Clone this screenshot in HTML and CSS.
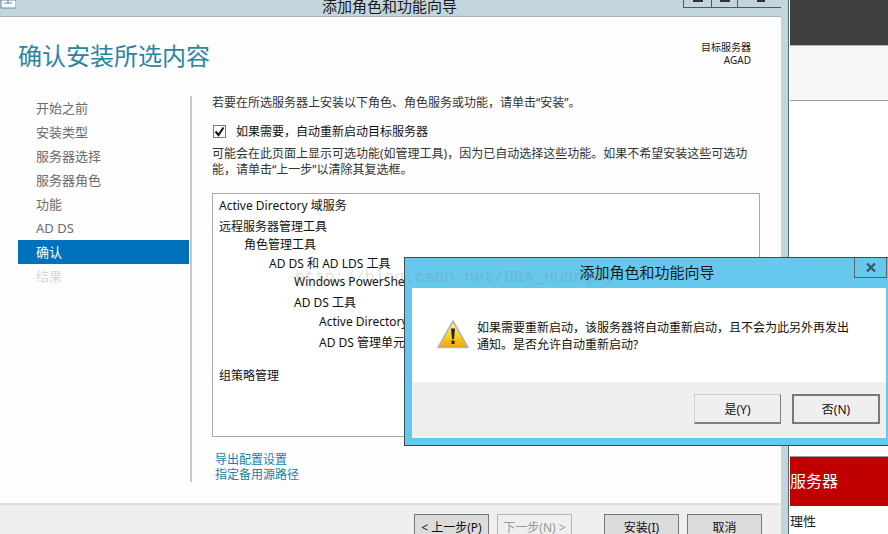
FILE: index.html
```html
<!DOCTYPE html>
<html lang="zh-CN">
<head>
    <meta charset="UTF-8">
    <title>添加角色和功能向导</title>
    <link rel="stylesheet" href="styles.css">
</head>
<body>
    <div class="side-panel">
        <div class="panel-dark"></div>
        <div class="panel-light"></div>
        <div class="panel-blank"></div>
        <div class="panel-red">服务器</div>
        <div class="panel-text">管理性</div>
    </div>

    <div class="wizard">
        <div class="titlebar">
            <svg class="app-icon" width="16" height="9" viewBox="0 0 16 9">
                <path d="M0 0H16V8H1V0" fill="#fff" stroke="#5f8ea3"/>
                <path d="M4 3H12M8 0V4" stroke="#5f8ea3" fill="none"/>
            </svg>
            <div class="title-text">添加角色和功能向导</div>
            <div class="win-buttons">
                <div class="win-btn min"><span></span></div>
                <div class="win-btn max"><span></span></div>
                <div class="win-btn close"><span></span></div>
            </div>
        </div>

        <div class="wizard-body">
            <div class="wizard-head">
                <h1>确认安装所选内容</h1>
                <div class="target">
                    <div>目标服务器</div>
                    <div>AGAD</div>
                </div>
            </div>

            <div class="wizard-main">
                <ul class="steps">
                    <li>开始之前</li>
                    <li>安装类型</li>
                    <li>服务器选择</li>
                    <li>服务器角色</li>
                    <li>功能</li>
                    <li>AD DS</li>
                    <li class="active">确认</li>
                    <li class="disabled">结果</li>
                </ul>

                <div class="content">
                    <p class="intro">若要在所选服务器上安装以下角色、角色服务或功能，请单击“安装”。</p>
                    <div class="check-row">
                        <div class="checkbox">
                            <svg width="11" height="11" viewBox="0 0 11 11">
                                <path d="M1.5 5.5L4.5 9L9.5 1.5" fill="none" stroke="#111" stroke-width="2"/>
                            </svg>
                        </div>
                        <span>如果需要，自动重新启动目标服务器</span>
                    </div>
                    <p class="note">可能会在此页面上显示可选功能(如管理工具)，因为已自动选择这些功能。如果不希望安装这些可选功能，请单击“上一步”以清除其复选框。</p>

                    <div class="feature-box">
                        <div class="row">Active Directory 域服务</div>
                        <div class="row sp3">远程服务器管理工具</div>
                        <div class="row lv1">角色管理工具</div>
                        <div class="row lv2 sp1">AD DS 和 AD LDS 工具</div>
                        <div class="row lv3">Windows PowerShell 的 Active Directory 模块</div>
                        <div class="row lv3 sp3">AD DS 工具</div>
                        <div class="row lv4 sp1">Active Directory 管理中心</div>
                        <div class="row lv4 sp3">AD DS 管理单元和命令行工具</div>
                        <div class="row sp15">组策略管理</div>
                    </div>

                    <div class="links">
                        <a>导出配置设置</a>
                        <a>指定备用源路径</a>
                    </div>
                </div>
            </div>
        </div>

        <div class="wizard-foot">
            <button class="btn">&lt; 上一步(P)</button>
            <button class="btn off">下一步(N) &gt;</button>
            <button class="btn install">安装(I)</button>
            <button class="btn">取消</button>
        </div>
    </div>

    <div class="dialog">
        <div class="dialog-title">
            <span>添加角色和功能向导</span>
            <div class="dialog-close">
                <svg width="10" height="9" viewBox="0 0 10 9">
                    <path d="M1 0.5L9 8.5M9 0.5L1 8.5" stroke="#3d5560" stroke-width="2.2" fill="none"/>
                </svg>
            </div>
        </div>
        <div class="dialog-msg">
            <svg class="warn" width="32" height="29" viewBox="0 0 32 29">
                <defs>
                    <linearGradient id="warnfill" x1="0" y1="0" x2="0" y2="1">
                        <stop offset="0" stop-color="#fff3a0"/>
                        <stop offset="0.55" stop-color="#fbd11e"/>
                        <stop offset="1" stop-color="#f0a400"/>
                    </linearGradient>
                </defs>
                <path d="M16 1L31 27.5H1Z" fill="url(#warnfill)" stroke="#b4b4b4" stroke-width="1.6" stroke-linejoin="round"/>
                <path d="M14 8.5H18L17 19H15Z" fill="#222"/>
                <rect x="14.5" y="20.5" width="3" height="3.5" fill="#222"/>
            </svg>
            <p>如果需要重新启动，该服务器将自动重新启动，且不会为此另外再发出通知。是否允许自动重新启动?</p>
        </div>
        <div class="dialog-foot">
            <button class="dlg-btn">是(Y)</button>
            <button class="dlg-btn focus">否(N)</button>
        </div>
    </div>

    <div class="watermark">http://blog.csdn.net/DBA_Huangzj</div>
</body>
</html>
```

FILE: styles.css
```css
html, body {
    margin: 0;
    height: 534px;
    overflow: hidden;
}

body {
    position: relative;
    background: #fff;
    font-family: "Noto Sans", "Noto Sans CJK SC", sans-serif;
    font-size: 12px;
    color: #222;
}

/* server manager behind the wizard */
.side-panel {
    position: absolute;
    left: 790px;
    top: 0;
    width: 98px;
    height: 534px;
    overflow: hidden;
    display: flex;
    flex-direction: column;
}

.panel-dark {
    height: 45px;
    flex: none;
    background: #404040;
    border-bottom: 1px solid #b5b5b5;
}

.panel-light {
    height: 54px;
    flex: none;
    background: #f8f8f8;
    border-bottom: 1px solid #999;
}

.panel-blank {
    height: 355px;
    flex: none;
    border-bottom: 1px solid #999;
}

.panel-red {
    height: 49px;
    flex: none;
    background: #c00000;
    color: #fff;
    font-size: 16px;
    line-height: 49px;
}

.panel-text {
    font-size: 13px;
    line-height: 30px;
    margin-left: -13px;
    white-space: nowrap;
}

/* wizard window */
.wizard {
    position: absolute;
    left: 0;
    top: 0;
    width: 789px;
    height: 534px;
    box-sizing: border-box;
    background: #c2d5dc;
    border-right: 1px solid #5a6a72;
    padding-right: 7px;
    display: flex;
    flex-direction: column;
    overflow: hidden;
}

.titlebar {
    height: 16px;
    flex: none;
    position: relative;
    display: flex;
    justify-content: center;
    align-items: flex-end;
    overflow: hidden;
    border-bottom: 1px solid #a5b4bb;
}

.app-icon {
    position: absolute;
    left: 0;
    top: 0;
}

.title-text {
    font-size: 15px;
    line-height: 22px;
    margin-left: -2px;
    margin-bottom: -1px;
    white-space: nowrap;
    color: #1a1a1a;
}

.win-buttons {
    position: absolute;
    left: 683px;
    top: 0;
    width: 101px;
    height: 8px;
    box-sizing: border-box;
    display: flex;
    border: 1px solid #4c5a62;
    border-top: none;
}

.win-btn {
    display: flex;
    justify-content: center;
    align-items: flex-start;
    border-right: 1px solid #4c5a62;
}

.win-btn span {
    display: block;
    width: 10px;
    height: 2px;
    background: #333;
}

.win-btn.min { width: 27px; }
.win-btn.max { width: 25px; }
.win-btn.close { flex: 1; border-right: none; }
.win-btn.close span { width: 8px; }

.wizard-body {
    flex: 1;
    min-height: 0;
    background: #fdfdfd;
    display: flex;
    flex-direction: column;
}

.wizard-head {
    height: 79px;
    flex: none;
    display: flex;
    justify-content: space-between;
    padding: 0 30px 0 18px;
}

h1 {
    margin: 19px 0 0;
    font-size: 24px;
    font-weight: 400;
    line-height: 40px;
    color: #2a84a4;
}

.target {
    margin-top: 24px;
    font-size: 10px;
    line-height: 13px;
    text-align: right;
    color: #222;
}

.wizard-main {
    flex: 1;
    display: flex;
    min-height: 0;
}

.steps {
    list-style: none;
    width: 171px;
    height: 386px;
    margin: 0 0 0 18px;
    padding: 0;
    box-sizing: content-box;
    border-right: 2px solid #c8c8c8;
    padding-right: 1px;
}

.steps li {
    height: 24px;
    line-height: 24px;
    padding-left: 18px;
    font-size: 13px;
    color: #6c6c6c;
}

.steps li.active {
    background: #0072bc;
    color: #fff;
}

.steps li.disabled {
    color: #d8d8d8;
}

.content {
    width: 548px;
    margin-left: 20px;
}

.intro {
    margin: 0;
    line-height: 14px;
    color: #333;
}

.check-row {
    display: flex;
    align-items: center;
    height: 16px;
    margin-top: 13px;
    margin-left: 1px;
    color: #111;
}

.checkbox {
    width: 13px;
    height: 13px;
    box-sizing: border-box;
    border: 1px solid #777;
    background: #fff;
    margin-right: 10px;
    display: flex;
    align-items: center;
    justify-content: center;
}

.note {
    margin: 7px 0 0;
    line-height: 16px;
    color: #333;
}

.feature-box {
    height: 244px;
    box-sizing: border-box;
    margin-top: 15px;
    padding: 3px 0 0 6px;
    border: 1px solid #aaa;
    background: #fff;
    overflow: hidden;
    color: #111;
}

.row {
    height: 18px;
    line-height: 18px;
    white-space: nowrap;
}

.lv1 { padding-left: 25px; }
.lv2 { padding-left: 50px; }
.lv3 { padding-left: 75px; }
.lv4 { padding-left: 100px; }
.sp1 { margin-top: 1px; }
.sp3 { margin-top: 3px; }
.sp15 { margin-top: 15px; }

.links {
    margin: 15px 0 0 3px;
    display: flex;
    flex-direction: column;
    line-height: 15px;
    color: #1b7fa6;
}

.wizard-foot {
    height: 31px;
    flex: none;
    box-sizing: border-box;
    background: #efefef;
    border-top: 2px solid #dedede;
    padding: 9px 0 0 414px;
    display: flex;
    align-items: flex-start;
}

.btn {
    width: 75px;
    height: 28px;
    flex: none;
    box-sizing: border-box;
    margin: 0 8px 0 0;
    padding: 0 0 3px;
    border: 1px solid #777;
    background: #dcdcdc;
    font: inherit;
    color: #111;
}

.btn.off {
    background: #efefef;
    border-color: #b5b5b5;
    color: #9a9a9a;
}

.btn.install {
    margin-left: 24px;
}

/* confirm dialog */
.dialog {
    position: absolute;
    left: 404px;
    top: 257px;
    width: 486px;
    height: 189px;
    box-sizing: border-box;
    border: 1px solid #3c4a52;
    background: #66c8ec;
    padding: 0 3px 7px 7px;
    display: flex;
    flex-direction: column;
}

.dialog-title {
    height: 30px;
    flex: none;
    position: relative;
    text-align: center;
    font-size: 15px;
    line-height: 29px;
    color: #1a1a1a;
}

.dialog-title span {
    margin-right: 4px;
}

.dialog-close {
    position: absolute;
    left: 442px;
    top: 0;
    width: 33px;
    height: 20px;
    box-sizing: border-box;
    border: 1px solid #57666e;
    border-top: none;
    display: flex;
    align-items: center;
    justify-content: center;
}

.dialog-msg {
    height: 94px;
    flex: none;
    width: 474px;
    box-sizing: border-box;
    background: #fff;
    display: flex;
    align-items: flex-start;
    padding: 31px 0 0 25px;
}

.warn {
    flex: none;
    margin-top: 1px;
}

.dialog-msg p {
    width: 374px;
    margin: 0 0 0 8px;
    line-height: 17px;
    color: #111;
}

.dialog-foot {
    flex: 1;
    width: 474px;
    background: #efefef;
    display: flex;
    justify-content: flex-end;
    align-items: flex-start;
    gap: 11px;
    padding: 12px 6px 0 0;
    box-sizing: border-box;
}

.dlg-btn {
    width: 87px;
    height: 30px;
    box-sizing: border-box;
    padding: 0;
    border: 1px solid #d0d0d0;
    border-right-color: #7f7f7f;
    border-bottom: 2px solid #7f7f7f;
    background: #efefef;
    font: inherit;
    color: #111;
}

.dlg-btn.focus {
    width: 88px;
    border: 2px solid #7a7a7a;
}

.watermark {
    position: absolute;
    left: 295px;
    top: 268px;
    font-family: "Liberation Mono", monospace;
    font-size: 16.6px;
    line-height: 20px;
    white-space: nowrap;
    color: rgba(120, 120, 120, 0.22);
}
```
